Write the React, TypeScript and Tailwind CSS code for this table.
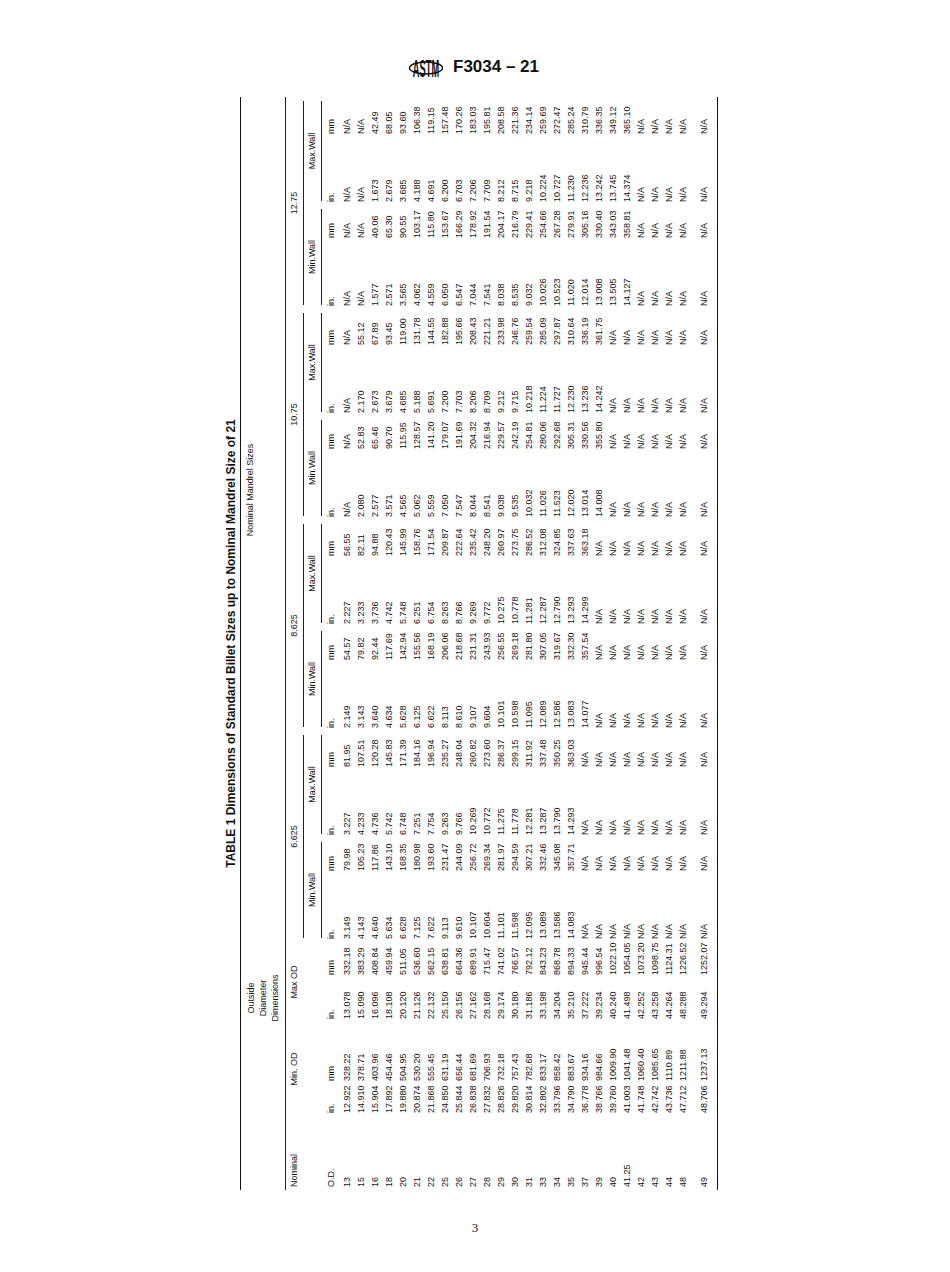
const NA = "N/A";

const fill = (vals: string[], lead: number) => {
  const out = [...Array(lead).fill(NA), ...vals];
  while (out.length < 26) out.push(NA);
  return out;
};

const od = ["13", "15", "16", "18", "20", "21", "22", "25", "26", "27", "28", "29", "30", "31", "33", "34", "35", "37", "39", "40", "41.25", "42", "43", "44", "48", "49"];

const minOdIn = ["12.922", "14.910", "15.904", "17.892", "19.880", "20.874", "21.868", "24.850", "25.844", "26.838", "27.832", "28.826", "29.820", "30.814", "32.802", "33.796", "34.790", "36.778", "38.766", "39.760", "41.003", "41.748", "42.742", "43.736", "47.712", "48.706"];
const minOdMm = ["328.22", "378.71", "403.96", "454.46", "504.95", "530.20", "555.45", "631.19", "656.44", "681.69", "706.93", "732.18", "757.43", "782.68", "833.17", "858.42", "883.67", "934.16", "984.66", "1009.90", "1041.48", "1060.40", "1085.65", "1110.89", "1211.88", "1237.13"];
const maxOdIn = ["13.078", "15.090", "16.096", "18.108", "20.120", "21.126", "22.132", "25.150", "26.156", "27.162", "28.168", "29.174", "30.180", "31.186", "33.198", "34.204", "35.210", "37.222", "39.234", "40.240", "41.498", "42.252", "43.258", "44.264", "48.288", "49.294"];
const maxOdMm = ["332.18", "383.29", "408.84", "459.94", "511.05", "536.60", "562.15", "638.81", "664.36", "689.91", "715.47", "741.02", "766.57", "792.12", "843.23", "868.78", "894.33", "945.44", "996.54", "1022.10", "1054.05", "1073.20", "1098.75", "1124.31", "1226.52", "1252.07"];

// mandrel groups, each: min in, min mm, max in, max mm
const groups = [
  {
    size: "6.625",
    cols: [
      fill(["3.149", "4.143", "4.640", "5.634", "6.628", "7.125", "7.622", "9.113", "9.610", "10.107", "10.604", "11.101", "11.598", "12.095", "13.089", "13.586", "14.083"], 0),
      fill(["79.98", "105.23", "117.86", "143.10", "168.35", "180.98", "193.60", "231.47", "244.09", "256.72", "269.34", "281.97", "294.59", "307.21", "332.46", "345.08", "357.71"], 0),
      fill(["3.227", "4.233", "4.736", "5.742", "6.748", "7.251", "7.754", "9.263", "9.766", "10.269", "10.772", "11.275", "11.778", "12.281", "13.287", "13.790", "14.293"], 0),
      fill(["81.95", "107.51", "120.28", "145.83", "171.39", "184.16", "196.94", "235.27", "248.04", "260.82", "273.60", "286.37", "299.15", "311.92", "337.48", "350.25", "363.03"], 0),
    ],
  },
  {
    size: "8.625",
    cols: [
      fill(["2.149", "3.143", "3.640", "4.634", "5.628", "6.125", "6.622", "8.113", "8.610", "9.107", "9.604", "10.101", "10.598", "11.095", "12.089", "12.586", "13.083", "14.077"], 0),
      fill(["54.57", "79.82", "92.44", "117.69", "142.94", "155.56", "168.19", "206.06", "218.68", "231.31", "243.93", "256.55", "269.18", "281.80", "307.05", "319.67", "332.30", "357.54"], 0),
      fill(["2.227", "3.233", "3.736", "4.742", "5.748", "6.251", "6.754", "8.263", "8.766", "9.269", "9.772", "10.275", "10.778", "11.281", "12.287", "12.790", "13.293", "14.299"], 0),
      fill(["56.55", "82.11", "94.88", "120.43", "145.99", "158.76", "171.54", "209.87", "222.64", "235.42", "248.20", "260.97", "273.75", "286.52", "312.08", "324.85", "337.63", "363.18"], 0),
    ],
  },
  {
    size: "10.75",
    cols: [
      fill(["2.080", "2.577", "3.571", "4.565", "5.062", "5.559", "7.050", "7.547", "8.044", "8.541", "9.038", "9.535", "10.032", "11.026", "11.523", "12.020", "13.014", "14.008"], 1),
      fill(["52.83", "65.46", "90.70", "115.95", "128.57", "141.20", "179.07", "191.69", "204.32", "216.94", "229.57", "242.19", "254.81", "280.06", "292.68", "305.31", "330.56", "355.80"], 1),
      fill(["2.170", "2.673", "3.679", "4.685", "5.188", "5.691", "7.200", "7.703", "8.206", "8.709", "9.212", "9.715", "10.218", "11.224", "11.727", "12.230", "13.236", "14.242"], 1),
      fill(["55.12", "67.89", "93.45", "119.00", "131.78", "144.55", "182.88", "195.66", "208.43", "221.21", "233.98", "246.76", "259.54", "285.09", "297.87", "310.64", "336.19", "361.75"], 1),
    ],
  },
  {
    size: "12.75",
    cols: [
      fill(["1.577", "2.571", "3.565", "4.062", "4.559", "6.050", "6.547", "7.044", "7.541", "8.038", "8.535", "9.032", "10.026", "10.523", "11.020", "12.014", "13.008", "13.505", "14.127"], 2),
      fill(["40.06", "65.30", "90.55", "103.17", "115.80", "153.67", "166.29", "178.92", "191.54", "204.17", "216.79", "229.41", "254.66", "267.28", "279.91", "305.16", "330.40", "343.03", "358.81"], 2),
      fill(["1.673", "2.679", "3.685", "4.188", "4.691", "6.200", "6.703", "7.206", "7.709", "8.212", "8.715", "9.218", "10.224", "10.727", "11.230", "12.236", "13.242", "13.745", "14.374"], 2),
      fill(["42.49", "68.05", "93.60", "106.38", "119.15", "157.48", "170.26", "183.03", "195.81", "208.58", "221.36", "234.14", "259.69", "272.47", "285.24", "310.79", "336.35", "349.12", "365.10"], 2),
    ],
  },
];

// column widths, table drawn upright then turned a quarter turn
const widths = [
  "w-[74px]", "w-[32px]", "w-[62px]", "w-[44px]", "w-[36px]",
  "w-[68px]", "w-[36px]", "w-[68px]", "w-[39px]",
  "w-[68px]", "w-[36px]", "w-[68px]", "w-[39px]",
  "w-[68px]", "w-[36px]", "w-[68px]", "w-[39px]",
  "w-[68px]", "w-[36px]", "w-[68px]", "w-[40px]",
];

const columns = [od, minOdIn, minOdMm, maxOdIn, maxOdMm, ...groups.flatMap((g) => g.cols)];
const rows = od.map((_, r) => columns.map((c) => c[r]));

const Row = ({ cells }: { cells: string[] }) => (
  <div className="flex h-[14px] leading-[14px]">
    {cells.map((c, i) => (
      <div key={i} className={`${widths[i]} shrink-0 pl-[3px] whitespace-nowrap`}>
        {c}
      </div>
    ))}
  </div>
);

const Ruled = ({ label, w }: { label: string; w: string }) => (
  <div className={`${w} shrink-0 flex flex-col`}>
    <div className="h-[17px] leading-[17px] text-center whitespace-nowrap">{label}</div>
    <div className="mx-[4px] border-b border-[#222]" />
  </div>
);

const AstmLogo = () => (
  <svg width="36" height="30" viewBox="0 0 36 30">
    <g transform="translate(18 25) scale(0.62 1.55)">
      <text
        x="0"
        y="0"
        textAnchor="middle"
        fontSize="15"
        fontWeight="bold"
        fontFamily="Liberation Sans, Arial, sans-serif"
        fill="#111"
      >
        ASTM
      </text>
    </g>
    <ellipse cx="18" cy="16" rx="16.5" ry="6" fill="none" stroke="#111" strokeWidth="1.4" />
  </svg>
);

const BilletTable = () => (
  <div className="w-[1093px] h-[496px] origin-top-left -rotate-90 translate-y-[1093px] flex flex-col text-[9px]">
    <div className="h-[18px] flex items-center justify-center font-bold text-[12px] whitespace-nowrap">
      TABLE 1 Dimensions of Standard Billet Sizes up to Nominal Mandrel Size of 21
    </div>
    <div className="border-t border-[#111]">
      {/* header row 1 */}
      <div className="flex h-[45px] border-b border-[#222]">
        <div className="w-[74px] shrink-0" />
        <div className="w-[174px] shrink-0 pt-[4px] pl-[62px] text-center leading-[12px]">
          Outside
          <br />
          Diameter
          <br />
          Dimensions
        </div>
        <div className="w-[845px] shrink-0 pt-[3px] pl-[59px] text-center leading-[12px]">
          Nominal Mandrel Sizes
        </div>
      </div>
      {/* header row 2 */}
      <div className="flex h-[18px]">
        <div className="w-[74px] shrink-0 pl-[3px] leading-[17px]">Nominal</div>
        <div className="w-[94px] shrink-0 text-center leading-[17px]">Min. OD</div>
        <div className="w-[80px] shrink-0 text-center leading-[17px]">Max OD</div>
        {groups.map((g, i) => (
          <Ruled key={g.size} label={g.size} w={i === 3 ? "w-[212px]" : "w-[211px]"} />
        ))}
      </div>
      {/* header row 3 */}
      <div className="flex h-[18px]">
        <div className="w-[248px] shrink-0" />
        {groups.map((g, i) => (
          <div key={g.size} className="flex">
            <Ruled label="Min.Wall" w="w-[104px]" />
            <Ruled label="Max.Wall" w={i === 3 ? "w-[108px]" : "w-[107px]"} />
          </div>
        ))}
      </div>
      {/* header row 4 */}
      <div className="flex h-[18px] leading-[18px]">
        {widths.map((w, i) => (
          <div key={i} className={`${w} shrink-0 pl-[3px]`}>
            {i === 0 ? "O.D." : i % 2 === 1 ? "in." : "mm"}
          </div>
        ))}
      </div>
      {rows.slice(0, 25).map((r, i) => (
        <Row key={i} cells={r} />
      ))}
      <div className="h-[7px]" />
      <Row cells={rows[25]} />
      <div className="h-[7px] border-b border-[#111]" />
    </div>
  </div>
);

export default function App() {
  return (
    <div className="w-[950px] h-[1272px] bg-white overflow-hidden text-[#111] font-['Liberation_Sans',Arial,sans-serif]">
      <div className="h-[97px] flex items-start pt-[52px] pl-[408px]">
        <AstmLogo />
        <div className="ml-[9px] text-[17px] font-bold leading-[30px]">F3034 – 21</div>
      </div>
      <div className="ml-[222px] w-[496px] h-[1093px]">
        <BilletTable />
      </div>
      <div className="mt-[30px] text-center text-[13px] leading-[16px] font-['Liberation_Serif',serif]">3</div>
    </div>
  );
}
